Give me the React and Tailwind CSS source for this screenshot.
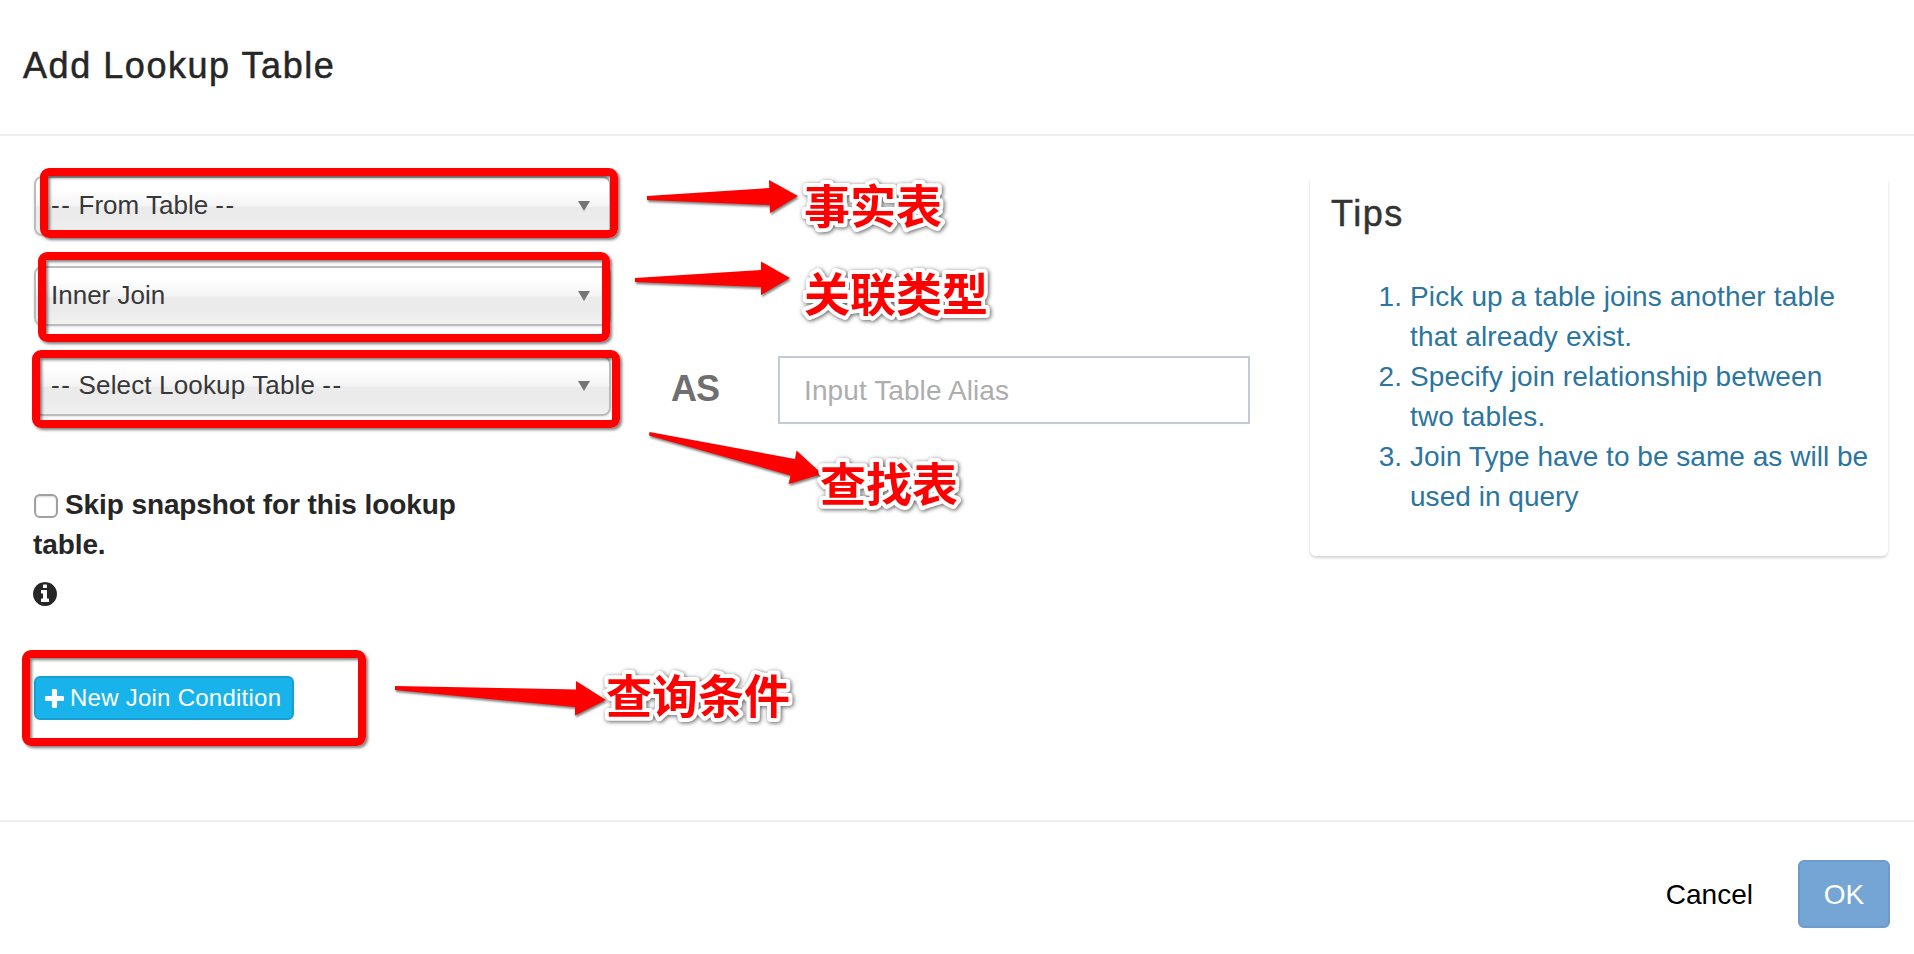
import React from "react";

function PlusIcon() {
  return (
    <svg className="mr-[6px] size-[19px]" viewBox="192 128 1408 1408" fill="currentColor">
      <path d="M1600 736v192q0 40-28 68t-68 28h-416v416q0 40-28 68t-68 28h-192q-40 0-68-28t-28-68v-416h-416q-40 0-68-28t-28-68v-192q0-40 28-68t68-28h416v-416q0-40 28-68t68-28h192q40 0 68 28t28 68v416h416q40 0 68 28t28 68z" />
    </svg>
  );
}

function InfoIcon() {
  return (
    <svg className="-ml-px mt-[17px] size-[24px]" viewBox="128 128 1536 1536" fill="currentColor">
      <path d="M1152 1376v-160q0-14-9-23t-23-9h-96v-512q0-14-9-23t-23-9h-320q-14 0-23 9t-9 23v160q0 14 9 23t23 9h96v320h-96q-14 0-23 9t-9 23v160q0 14 9 23t23 9h448q14 0 23-9t9-23zM1024 480v-160q0-14-9-23t-23-9h-192q-14 0-23 9t-9 23v160q0 14 9 23t23 9h192q14 0 23-9t9-23zM1664 896q0 209-103 385.5t-279.5 279.5-385.5 103-385.5-103-279.5-279.5-103-385.5 103-385.5 279.5-279.5 385.5-103 385.5 103 279.5 279.5 103 385.5z" />
    </svg>
  );
}

function Select({ children }) {
  return (
    <div className="flex h-[60px] w-[577px] items-center justify-between rounded-[8px] border-2 border-[#bcbcbc] bg-[linear-gradient(to_bottom,#ffffff_0%,#ffffff_20%,#f4f4f4_50%,#ebebeb_52%,#ebebeb_75%,#f1f1f1_100%)] pb-[2px] pl-[15px] pr-[19px] text-[26px] leading-[40px] text-[#383838] shadow-[0_1px_3px_rgba(0,0,0,0.12)]">
      <span className="whitespace-pre">{children}</span>
      <svg width="12" height="10" viewBox="0 0 12 10" className="relative top-px">
        <path d="M0 0H12L6 10Z" fill="#757575" />
      </svg>
    </div>
  );
}

function Dashes() {
  return <span className="tracking-[1.5px]">--</span>;
}

const tips = [
  { text: "Pick up a table joins another table that already exist.", tracking: "tracking-[0.14px]" },
  { text: "Specify join relationship between two tables.", tracking: "tracking-[0.14px]" },
  { text: "Join Type have to be same as will be used in query", tracking: "tracking-[0.03px]" },
];

const frameClass =
  "absolute rounded-[9px] border-8 border-[#ff0000] shadow-[2px_2px_3px_rgba(0,0,0,0.5),inset_2px_2px_3px_rgba(0,0,0,0.5)]";

const frames = [
  "left-[40px] top-[168px] h-[70px] w-[578px]",
  "left-[38px] top-[252px] h-[90px] w-[572px]",
  "left-[32px] top-[350px] h-[78px] w-[588px]",
  "left-[22px] top-[650px] h-[96px] w-[344px]",
];

const arrows = [
  "647,196 769.3,188 769,180 798,196 770,213 769.7,205 647,200",
  "635,278 761,270 761,261.5 790,278 761,295 761,287 635,282",
  "649.5,432 795,459 796.5,450.5 822,474 788.5,484 790.5,475.5 649,435.5",
  "395,686 576,689.5 576,681 606,700 575,715.5 575,707 395,690",
];

const labels = [
  { text: "事实表", x: 804, y: 223 },
  { text: "关联类型", x: 804, y: 311 },
  { text: "查找表", x: 820, y: 501 },
  { text: "查询条件", x: 606, y: 713 },
];

function Annotations() {
  return (
    <div className="pointer-events-none absolute inset-0">
      {frames.map((f) => (
        <div key={f} className={`${frameClass} ${f}`} />
      ))}
      <svg width="1914" height="954" viewBox="0 0 1914 954" className="absolute inset-0">
        <g fill="#ff0000" className="drop-shadow-[1px_2px_1px_rgba(0,0,0,0.5)]">
          {arrows.map((a) => (
            <polygon key={a} points={a} />
          ))}
        </g>
        <g
          fill="#ff0000"
          stroke="#ffffff"
          strokeWidth="8"
          strokeLinejoin="round"
          paintOrder="stroke"
          className="text-[46px] font-bold drop-shadow-[1px_1px_2px_rgba(0,0,0,0.65)]"
          fontFamily="'Noto Sans CJK SC', sans-serif"
        >
          {labels.map((l) => (
            <text key={l.text} x={l.x} y={l.y}>
              {l.text}
            </text>
          ))}
        </g>
      </svg>
    </div>
  );
}

export default function App() {
  return (
    <div className="relative flex h-[954px] w-[1914px] flex-col overflow-hidden bg-white font-['Liberation_Sans',Arial,sans-serif] text-[28px] leading-[40px] text-[#262626]">
      <header className="h-[136px] border-b-2 border-[#eeeeee] pl-[23px] pt-[46px]">
        <h4 className="text-[36px] font-normal tracking-[1.55px] [-webkit-text-stroke:0.5px_#262626]">Add Lookup Table</h4>
      </header>

      <main className="flex h-[684px] items-start pl-[34px] pt-[40px]">
        <section className="flex w-[1216px] flex-col">
          <div className="flex flex-col gap-[30px]">
            <Select>
              <Dashes /> From Table <Dashes />
            </Select>
            <Select>Inner Join</Select>
            <div className="flex items-start">
              <Select>
                <Dashes /> <span className="tracking-[0.15px]">Select Lookup Table</span> <Dashes />
              </Select>
              <span className="ml-[60px] mt-[13px] w-[107px] text-[36px] font-bold tracking-[-1px] text-[#6f6f6f]">AS</span>
              <input
                className="h-[68px] w-[472px] border-2 border-[#c5cad8] px-6 pt-[2px] tracking-[0.1px] outline-none placeholder:text-[#adadad]"
                placeholder="Input Table Alias"
              />
            </div>
          </div>
          <label className="-ml-px mt-[61px] w-[460px] font-bold tracking-[-0.1px]">
            <span className="ml-px mr-[7px] inline-block size-[24px] rounded-[6px] border-2 border-[#a0a0a0] bg-white align-[-4px] shadow-[inset_0_1px_2px_rgba(0,0,0,0.15)]" />
            Skip snapshot for this lookup table.
          </label>
          <InfoIcon />
          <button className="mt-[70px] flex h-[44px] w-[260px] items-center rounded-[6px] border-2 border-[#179fd3] bg-[#19b3eb] pl-[9px] text-[24px] text-white">
            <PlusIcon />
            <span className="whitespace-nowrap tracking-[0.25px]">New Join Condition</span>
          </button>
        </section>

        <aside className="ml-[60px] h-[380px] w-[578px] rounded-[6px] bg-white pl-[20px] pr-[17px] pt-[18px] shadow-[0_2px_3px_rgba(0,0,0,0.17)]">
          <h4 className="pl-px text-[36px] tracking-[1.5px] text-[#333333] [-webkit-text-stroke:0.5px_#333333]">Tips</h4>
          <ol className="mt-[43px] list-decimal pl-[80px] text-[#2b75a0]">
            {tips.map((t) => (
              <li key={t.text} className={t.tracking}>
                {t.text}
              </li>
            ))}
          </ol>
        </aside>
      </main>

      <footer className="flex h-[134px] items-start justify-end border-t-2 border-[#eeeeee] pr-[24px] pt-[38px]">
        <button className="mr-[45px] h-[68px] pt-[2px] text-black">Cancel</button>
        <button className="h-[68px] w-[92px] rounded-[6px] border-2 border-[#6c9bcc] bg-[#75a5d5] pt-[2px] text-white">OK</button>
      </footer>

      <Annotations />
    </div>
  );
}
